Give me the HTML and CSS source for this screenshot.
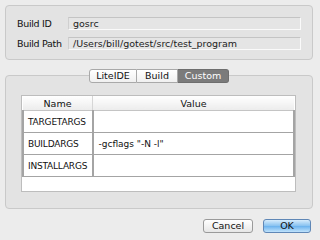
FILE: index.html
```html
<!DOCTYPE html>
<html lang="en">
<head>
  <meta charset="UTF-8" />
  <title>Build Config</title>
  <link rel="stylesheet" href="styles.css">
</head>
<body>
  <div class="group info">
    <div class="info-row">
      <span class="info-label">Build ID</span>
      <span class="field">gosrc</span>
    </div>
    <div class="info-row">
      <span class="info-label">Build Path</span>
      <span class="field">/Users/bill/gotest/src/test_program</span>
    </div>
  </div>

  <div class="tabs">
    <span class="tab tab-liteide">LiteIDE</span>
    <span class="tab tab-build">Build</span>
    <span class="tab tab-custom active">Custom</span>
  </div>

  <div class="group pane">
    <div class="table-wrap">
      <table class="args">
        <thead>
          <tr><th class="col-name">Name</th><th>Value</th></tr>
        </thead>
        <tbody>
          <tr><td>TARGETARGS</td><td></td></tr>
          <tr><td>BUILDARGS</td><td>-gcflags "-N -l"</td></tr>
          <tr><td>INSTALLARGS</td><td></td></tr>
        </tbody>
      </table>
    </div>
  </div>

  <div class="buttons">
    <button class="btn">Cancel</button>
    <button class="btn default">OK</button>
  </div>
</body>
</html>
```

FILE: styles.css
```css
body {
  margin: 0;
  width: 320px;
  height: 240px;
  background: #ececec;
  color: #111;
  font-family: "DejaVu Sans", sans-serif;
  font-size: 9.5px;
  overflow: hidden;
}
.group {
  background: #e3e3e3;
  border: 1px solid #c9c9c9;
  border-radius: 4px;
  box-sizing: border-box;
  width: 308px;
  margin-left: 5px;
}
.info {
  margin-top: 5px;
  height: 55px;
  padding: 11px 0 0 11px;
}
.info-row {
  display: flex;
  align-items: center;
  height: 13px;
  margin-bottom: 7px;
}
.info-label {
  width: 51px;
  letter-spacing: -0.3px;
}
.field {
  width: 233px;
  height: 13px;
  box-sizing: border-box;
  line-height: 11px;
  padding-left: 4px;
  background: #e5e5e5;
  border-top: 1px solid #c4c4c4;
  border-left: 1px solid #cfcfcf;
  border-right: 1px solid #fafafa;
  border-bottom: 1px solid #fafafa;
  color: #222;
}
.tabs {
  display: flex;
  justify-content: center;
  margin-top: 9px;
  margin-left: 5px;
  width: 308px;
  position: relative;
  z-index: 1;
}
.tab {
  height: 14px;
  box-sizing: border-box;
  line-height: 12px;
  text-align: center;
  background: linear-gradient(#ffffff, #f0f0f0);
  border: 1px solid #a9a9a9;
  border-left: none;
}
.tab-liteide {
  width: 48px;
  border-left: 1px solid #a9a9a9;
  border-radius: 3px 0 0 3px;
}
.tab-build {
  width: 41px;
}
.tab-custom {
  width: 51px;
  border-radius: 0 3px 3px 0;
}
.tab.active {
  background: #7b7b7b;
  border-color: #6e6e6e;
  color: #fff;
}
.pane {
  margin-top: -8px;
  height: 134px;
  padding: 19px 16px 0 15px;
}
.table-wrap {
  width: 275px;
  height: 97px;
  box-sizing: border-box;
  background: #fff;
  border: 1px solid #bdbdbd;
}
.args {
  width: 100%;
  border-collapse: collapse;
  table-layout: fixed;
}
.args th {
  height: 14px;
  padding: 0;
  font-weight: normal;
  background: linear-gradient(#ffffff, #ececec);
  border-bottom: 1px solid #c4c4c4;
  border-left: 1px solid #d6d6d6;
}
.args th:first-child {
  border-left: none;
}
.args th.col-name {
  width: 69px;
}
.args td {
  height: 21px;
  padding: 0 0 0 5px;
  border: 1px solid #a4a4a4;
  border-width: 1px 2px 1px 2px;
  font-size: 9px;
  white-space: nowrap;
  overflow: hidden;
}
.args td:first-child {
  letter-spacing: -0.2px;
  padding-left: 4px;
}
.buttons {
  display: flex;
  justify-content: flex-end;
  gap: 10px;
  padding: 10px 9px 0 0;
}
.btn {
  font-family: "DejaVu Sans", sans-serif;
  font-size: 9.5px;
  height: 14px;
  width: 50px;
  padding: 0;
  line-height: 12px;
  border: 1px solid #9a9a9a;
  border-radius: 3px;
  background: linear-gradient(#ffffff, #e6e6e6);
  color: #111;
}
.btn.default {
  width: 48px;
  border-color: #5f87b6;
  background: linear-gradient(#d6ecfc, #86c1f0 50%, #6ab2ee 51%, #bfe2fb);
}
```
